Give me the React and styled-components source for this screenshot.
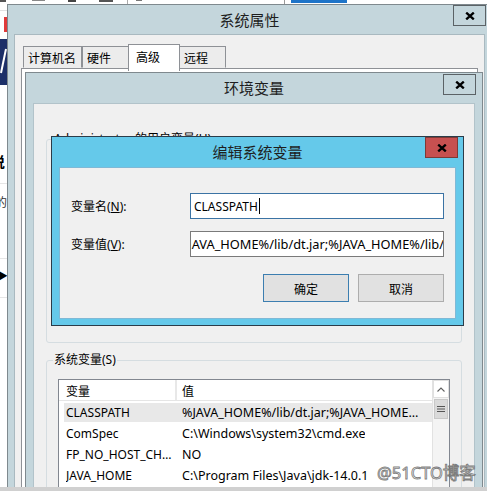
import React from 'react'
import styled, { createGlobalStyle } from 'styled-components'

const GlobalStyle = createGlobalStyle`
  html, body {
    margin: 0;
    padding: 0;
    background: #fff;
  }
  body {
    font-family: "Noto Sans", "Noto Sans CJK SC", sans-serif;
    font-size: 12px;
    color: #000;
  }
  * {
    box-sizing: border-box;
  }
`

const Screen = styled.div`
  width: 487px;
  height: 491px;
  display: flex;
  flex-direction: column;
  overflow: hidden;
`

const Desktop = styled.div`
  position: relative;
  flex: 1;
  display: grid;
  grid-template-rows: 4px 1fr;
  grid-template-columns: 7px 1fr;
  background: #fff;
  overflow: hidden;
`

const BottomEdge = styled.div`
  flex: none;
  height: 4px;
  background: #d0d0d0;
`

/* fragments of the page lying behind the windows */
const TopStrip = styled.div`
  grid-column: 1 / -1;
  display: flex;
  align-items: flex-start;
`

const Frag = styled.div`
  flex: none;
  margin-left: ${p => p.$ml || 0}px;
  width: ${p => p.$w}px;
  height: ${p => p.$h}px;
  background: ${p => p.$bg};
`

const LeftStrip = styled.div`
  display: flex;
  flex-direction: column;
  overflow: hidden;
`

const NavyBlock = styled.div`
  flex: none;
  height: 46px;
  background: #1c2f68;
  display: flex;
  align-items: center;
`

const CutText = styled.div`
  flex: none;
  margin-left: ${p => p.$ml}px;
  white-space: nowrap;
  font-size: ${p => p.$size || 14}px;
  font-weight: ${p => (p.$bold ? 700 : 400)};
  color: ${p => p.$color || '#000'};
  line-height: 18px;
`

/* generic window chrome */
const Window = styled.div`
  position: absolute;
  left: ${p => p.$x}px;
  top: ${p => p.$y}px;
  width: ${p => p.$w}px;
  height: ${p => p.$h}px;
  display: flex;
  flex-direction: column;
  border: 1px solid ${p => (p.$active ? '#2b3c49' : '#7f898e')};
  background: ${p => (p.$active ? '#65c9ea' : '#c4d6dc')};
  padding: 0 ${p => p.$frame}px ${p => p.$frameBottom ?? p.$frame}px;
`

const TitleBar = styled.div`
  flex: none;
  height: ${p => p.$h}px;
  margin: 0 -${p => p.$frame}px;
  display: grid;
  grid-template-columns: 1fr auto 1fr;
  align-items: center;
`

const Title = styled.div`
  grid-column: 2;
  font-family: "Noto Sans CJK SC", sans-serif;
  font-size: 15px;
  line-height: 18px;
  color: #1e1e1e;
  white-space: nowrap;
`

const CloseButton = styled.div`
  grid-column: 3;
  justify-self: end;
  align-self: start;
  width: 33px;
  height: 21px;
  margin-top: ${p => p.$top || 0}px;
  margin-right: ${p => p.$right}px;
  display: flex;
  align-items: center;
  justify-content: center;
  border: 1px solid ${p => (p.$active ? '#7d3a36' : '#5b6266')};
  background: ${p => (p.$active ? '#c75050' : 'transparent')};
`

const CloseGlyph = () => (
  <svg width="10" height="8" viewBox="0 0 10 8">
    <path d="M1.2 0.6 L8.8 7.4 M8.8 0.6 L1.2 7.4" stroke="#000" strokeWidth="2.3" fill="none" />
  </svg>
)

function Win({ title, x, y, w, h, frame, frameBottom, titleH, active, closeRight, closeTop, children }) {
  return (
    <Window $x={x} $y={y} $w={w} $h={h} $frame={frame} $frameBottom={frameBottom} $active={active}>
      <TitleBar $h={titleH} $frame={frame}>
        <Title>{title}</Title>
        <CloseButton $active={active} $right={closeRight} $top={closeTop}>
          <CloseGlyph />
        </CloseButton>
      </TitleBar>
      {children}
    </Window>
  )
}

/* 系统属性 */
const SysBody = styled.div`
  flex: 1;
  background: #f0f0f0;
  border: 1px solid #a9b9c0;
  padding: 9px 6px 0;
  display: flex;
  flex-direction: column;
`

const TabStrip = styled.div`
  display: flex;
  align-items: flex-end;
  height: 24px;
  padding-left: 2px;
  position: relative;
  z-index: 1;
`

const Tab = styled.div`
  flex: none;
  min-width: ${p => (p.$selected ? 52 : 47)}px;
  height: ${p => (p.$selected ? 27 : 22)}px;
  margin: 0 ${p => (p.$selected ? -1 : 0)}px ${p => (p.$selected ? -3 : 0)}px;
  padding: 0 5px ${p => (p.$selected ? 3 : 0)}px ${p => (p.$selected ? 7 : 4)}px;
  display: flex;
  align-items: center;
  font-family: "Noto Sans CJK SC", sans-serif;
  font-size: 12px;
  border: 1px solid #8e9196;
  border-bottom: ${p => (p.$selected ? 'none' : '1px solid transparent')};
  background: ${p => (p.$selected ? '#fff' : '#ececec')};
  position: relative;
  z-index: ${p => (p.$selected ? 2 : 0)};
`

const TabPanel = styled.div`
  flex: 1;
  background: #fff;
  border: 1px solid #8e9196;
`

/* 环境变量 */
const EnvBody = styled.div`
  flex: 1;
  background: #f0f0f0;
  border: 1px solid #b2c3ca;
  padding: 0 12px;
  display: flex;
  flex-direction: column;
`

const Group = styled.fieldset`
  flex: none;
  margin: ${p => p.$mt}px 0 0;
  min-width: 0;
  height: ${p => p.$h}px;
  padding: 11px 11px 0 6px;
  border: 1px solid #d5dde1;
  border-radius: 3px;
`

const GroupLabel = styled.legend`
  padding: 0 1px;
  font-size: 12px;
  line-height: 16px;
  white-space: nowrap;
`

const ListView = styled.div`
  margin-left: 5px;
  height: 140px;
  border: 1px solid #828790;
  background: #fff;
  display: grid;
  grid-template-columns: 1fr 17px;
  overflow: hidden;
`

const ListMain = styled.div`
  min-width: 0;
  display: flex;
  flex-direction: column;
`

const HeaderRow = styled.div`
  flex: none;
  height: 21px;
  display: grid;
  grid-template-columns: 118px 1fr;
  border-bottom: 1px solid #e5e5e5;
`

const HeaderCell = styled.div`
  display: flex;
  align-items: center;
  padding-left: ${p => p.$pl}px;
  border-right: ${p => (p.$divider ? '2px solid #e8e8e8' : 'none')};
  font-family: "Noto Sans CJK SC", sans-serif;
  font-size: 12px;
`

const Row = styled.div`
  flex: none;
  height: 21px;
  margin-left: 5px;
  display: grid;
  grid-template-columns: 112px 1fr;
  background: ${p => (p.$selected ? 'linear-gradient(transparent 2px, #e8e8e8 2px)' : 'transparent')};
`

const Cell = styled.div`
  min-width: 0;
  padding: 1px 4px 0 ${p => p.$pl}px;
  display: flex;
  align-items: center;
  font-size: ${p => p.$size || 12}px;
  overflow: hidden;

  span {
    overflow: hidden;
    white-space: nowrap;
    text-overflow: ellipsis;
  }
`

const ScrollBar = styled.div`
  display: flex;
  flex-direction: column;
  background: #f4f4f4;
  border-left: 1px solid #e2e2e2;
`

const ScrollArrow = styled.div`
  flex: none;
  height: 18px;
  display: flex;
  align-items: center;
  justify-content: center;
  background: #fff;
  border: 1px solid #e0e0e0;
`

const ScrollThumb = styled.div`
  flex: none;
  height: 20px;
  margin: 1px 1px 0;
  display: flex;
  align-items: center;
  justify-content: center;
  background: #dadada;
  border: 1px solid #c8c8c8;
`

/* 编辑系统变量 */
const DialogBody = styled.div`
  flex: 1;
  background: #f0f0f0;
  border: 1px solid #7fb9d6;
  padding: 25px 11px 0;
  display: flex;
  flex-direction: column;
`

const FieldGrid = styled.div`
  display: grid;
  grid-template-columns: 119px 254px;
  grid-auto-rows: 26px;
  row-gap: 12px;
  align-items: center;
`

const FieldLabel = styled.div`
  font-size: 12px;
  white-space: nowrap;
`

const TextBox = styled.div`
  height: 26px;
  display: flex;
  align-items: center;
  padding: 0 3px;
  background: #fff;
  border: 1px solid ${p => (p.$focused ? '#3b73a4' : '#7a7a7a')};
  overflow: hidden;
  white-space: nowrap;
  font-size: ${p => p.$size || 12}px;
`

const TextValue = styled.span`
  flex: none;
  margin-left: ${p => -(p.$scroll || 0)}px;
`

const Caret = styled.span`
  flex: none;
  width: 1px;
  height: 16px;
  margin-left: 1px;
  background: #000;
`

const ButtonRow = styled.div`
  display: flex;
  justify-content: flex-end;
  gap: 9px;
  margin-top: 17px;
`

const Button = styled.div`
  width: 86px;
  height: 28px;
  display: flex;
  align-items: center;
  justify-content: center;
  font-family: "Noto Sans CJK SC", sans-serif;
  font-size: 12px;
  background: #e1e1e1;
  border: 1px solid ${p => (p.$default ? '#3c7eb0' : '#adadad')};
`

const Watermark = styled.div`
  position: absolute;
  left: 377px;
  top: 463px;
  font-family: "Noto Sans", "Noto Sans CJK SC", sans-serif;
  font-size: 16.5px;
  line-height: 20px;
  white-space: nowrap;
  color: rgba(255, 255, 255, 0.6);
  -webkit-text-stroke: 0.9px rgba(105, 105, 105, 0.85);
`

const variables = [
  ['CLASSPATH', '%JAVA_HOME%/lib/dt.jar;%JAVA_HOME%/lib/tools.jar', true],
  ['ComSpec', 'C:\\Windows\\system32\\cmd.exe'],
  ['FP_NO_HOST_CHECK', 'NO'],
  ['JAVA_HOME', 'C:\\Program Files\\Java\\jdk-14.0.1'],
]

export default function App() {
  return (
    <Screen>
      <GlobalStyle />
      <Desktop>
        <TopStrip>
          <Frag $w={6} $h={2} $bg="#555" />
          <Frag $ml={26} $w={13} $h={1} $bg="#888" />
          <Frag $ml={23} $w={8} $h={2} $bg="#444" />
          <Frag $ml={23} $w={14} $h={2} $bg="#555" />
          <Frag $ml={14} $w={1} $h={4} $bg="#aaa" />
          <Frag $ml={8} $w={6} $h={1} $bg="#777" />
          <Frag $ml={142} $w={1} $h={4} $bg="#999" />
          <Frag $ml={6} $w={56} $h={3} $bg="#1e74c8" />
        </TopStrip>
        <LeftStrip>
          <Frag $w={7} $h={6} $bg="transparent" />
          <Frag $w={7} $h={1} $bg="#e2e2e2" />
          <Frag $w={7} $h={6} $bg="transparent" />
          <Frag $ml={4} $w={4} $h={15} $bg="#e03a3a" />
          <Frag $w={7} $h={7} $bg="transparent" />
          <NavyBlock>
            <svg width="7" height="46" viewBox="0 0 7 46">
              <path d="M6 10 L1 34" stroke="#fff" strokeWidth="2" />
            </svg>
          </NavyBlock>
          <Frag $w={7} $h={68} $bg="transparent" />
          <CutText $ml={-9} $bold>说</CutText>
          <Frag $w={7} $h={12} $bg="transparent" />
          <Frag $w={7} $h={1} $bg="#e6e6e6" />
          <Frag $w={7} $h={10} $bg="transparent" />
          <CutText $ml={-5} $size={12} $color="#333">的</CutText>
          <Frag $w={7} $h={46} $bg="transparent" />
          <Frag $w={7} $h={1} $bg="#e6e6e6" />
          <Frag $w={7} $h={8} $bg="transparent" />
          <CutText $ml={-3} $size={11}>▶</CutText>
          <Frag $w={7} $h={12} $bg="transparent" />
          <Frag $w={7} $h={1} $bg="#e6e6e6" />
        </LeftStrip>

        <Win title="系统属性" x={7} y={4} w={485} h={520} frame={6} titleH={29} closeRight={5}>
          <SysBody>
            <TabStrip>
              <Tab>计算机名</Tab>
              <Tab>硬件</Tab>
              <Tab $selected>高级</Tab>
              <Tab>远程</Tab>
            </TabStrip>
            <TabPanel />
          </SysBody>
        </Win>

        <Win title="环境变量" x={25} y={72} w={458} h={440} frame={7} titleH={30} closeRight={6} closeTop={1}>
          <EnvBody>
            <Group $mt={27} $h={212}>
              <GroupLabel>Administrator 的用户变量(U)</GroupLabel>
            </Group>
            <Group $mt={9} $h={200}>
              <GroupLabel>系统变量(S)</GroupLabel>
              <ListView>
                <ListMain>
                  <HeaderRow>
                    <HeaderCell $pl={7} $divider>变量</HeaderCell>
                    <HeaderCell $pl={5}>值</HeaderCell>
                  </HeaderRow>
                  {variables.map(([name, value, selected]) => (
                    <Row key={name} $selected={selected}>
                      <Cell $pl={2}><span>{name}</span></Cell>
                      <Cell $pl={6} $size={12.5}><span>{value}</span></Cell>
                    </Row>
                  ))}
                </ListMain>
                <ScrollBar>
                  <ScrollArrow>
                    <svg width="8" height="5" viewBox="0 0 8 5">
                      <polyline points="0.5,4.5 4,1 7.5,4.5" stroke="#606060" strokeWidth="1.1" fill="none" />
                    </svg>
                  </ScrollArrow>
                  <ScrollThumb>
                    <svg width="8" height="6" viewBox="0 0 8 6">
                      <path d="M0 0.5 H8 M0 3 H8 M0 5.5 H8" stroke="#555" strokeWidth="1" />
                    </svg>
                  </ScrollThumb>
                </ScrollBar>
              </ListView>
            </Group>
          </EnvBody>
        </Win>

        <Win title="编辑系统变量" x={51} y={136} w={413} h={190} frame={7} frameBottom={6} titleH={30} closeRight={5} active>
          <DialogBody>
            <FieldGrid>
              <FieldLabel>变量名(<u>N</u>):</FieldLabel>
              <TextBox $focused>
                <TextValue>CLASSPATH</TextValue>
                <Caret />
              </TextBox>
              <FieldLabel>变量值(<u>V</u>):</FieldLabel>
              <TextBox $size={12.8}>
                <TextValue $scroll={16.5}>%JAVA_HOME%/lib/dt.jar;%JAVA_HOME%/lib/tools.jar</TextValue>
              </TextBox>
            </FieldGrid>
            <ButtonRow>
              <Button $default>确定</Button>
              <Button>取消</Button>
            </ButtonRow>
          </DialogBody>
        </Win>

        <Watermark>@51CTO博客</Watermark>
      </Desktop>
      <BottomEdge />
    </Screen>
  )
}
